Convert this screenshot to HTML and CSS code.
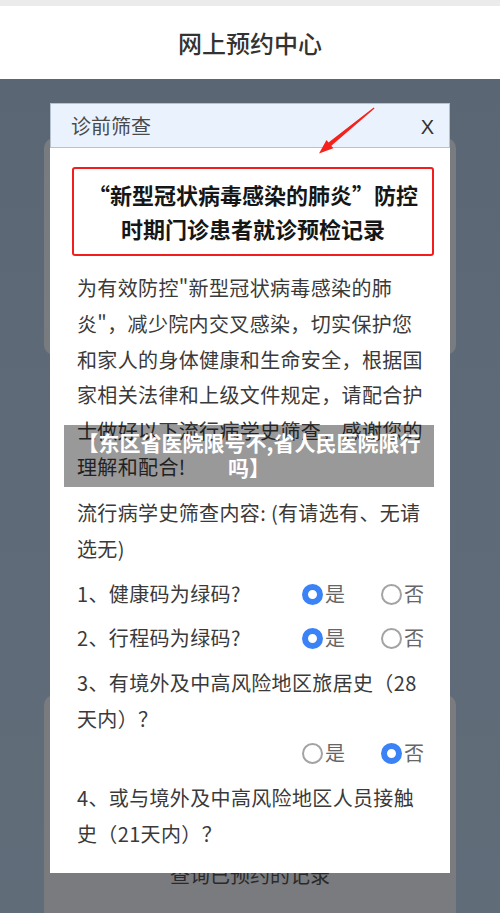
FILE: index.html
```html
<!DOCTYPE html>
<html lang="zh-CN">
<head>
<meta charset="utf-8">
<title>网上预约中心</title>
<link rel="stylesheet" href="styles.css">
</head>
<body>
<div class="strip"></div>
<header class="topbar">网上预约中心</header>
<main class="page">
  <div class="card card-one"></div>
  <div class="card card-two">查询已预约的记录</div>
</main>

<section class="modal">
  <div class="modal-head">
    <span class="modal-title">诊前筛查</span>
    <span class="modal-close">X</span>
  </div>
  <div class="modal-body">
    <div class="notice">“新型冠状病毒感染的肺炎”防控<br>时期门诊患者就诊预检记录</div>
    <p class="para">为有效防控"新型冠状病毒感染的肺炎"，减少院内交叉感染，切实保护您和家人的身体健康和生命安全，根据国家相关法律和上级文件规定，请配合护士做好以下流行病学史筛查，感谢您的理解和配合!</p>
    <p class="para para-2">流行病学史筛查内容: (有请选有、无请选无)</p>
    <div class="q q1">
      <span class="q-text">1、健康码为绿码?</span>
      <div class="opts">
        <span class="opt"><i class="radio on"></i>是</span>
        <span class="opt"><i class="radio"></i>否</span>
      </div>
    </div>
    <div class="q q2">
      <span class="q-text">2、行程码为绿码?</span>
      <div class="opts">
        <span class="opt"><i class="radio on"></i>是</span>
        <span class="opt"><i class="radio"></i>否</span>
      </div>
    </div>
    <div class="q q3">
      <span class="q-text">3、有境外及中高风险地区旅居史（28天内）？</span>
    </div>
    <div class="opts-row">
      <div class="opts">
        <span class="opt"><i class="radio"></i>是</span>
        <span class="opt"><i class="radio on"></i>否</span>
      </div>
    </div>
    <div class="q q4">
      <span class="q-text">4、或与境外及中高风险地区人员接触史（21天内）？</span>
    </div>
  </div>
</section>

<svg class="arrow" width="70" height="60" viewBox="0 0 70 60" aria-hidden="true">
  <polygon fill="#f5211c" points="63.7,8.4 64.5,9.5 21.3,46.8 23.3,49.3 9,54.5 16.5,41.0 18.5,43.5"/>
</svg>

<div class="banner">【东区省医院限号不,省人民医院限行吗】</div>
</body>
</html>
```

FILE: styles.css
```css
html, body {
  margin: 0;
  padding: 0;
  height: 913px;
  overflow: hidden;
}
body {
  position: relative;
  font-family: "Noto Sans CJK SC", "Noto Sans", sans-serif;
  background: #5e6a78;
}
.strip {
  height: 6px;
  background: #ebebeb;
}
.topbar {
  height: 73px;
  background: #ffffff;
  display: flex;
  align-items: center;
  justify-content: center;
  font-size: 24px;
  font-weight: 500;
  color: #333333;
}
.page {
  padding-top: 59px;
  box-sizing: border-box;
  background: linear-gradient(180deg, #5a6674 0%, #5e6a78 40%, #616c79 100%);
  height: 834px;
  overflow: hidden;
}
.card {
  margin: 0 44px;
  border-radius: 10px;
  background: #787b7f;
}
.card-one {
  height: 217px;
}
.card-two {
  margin-top: 340px;
  height: 240px;
  padding-top: 165px;
  box-sizing: border-box;
  text-align: center;
  font-size: 20px;
  line-height: 30px;
  color: #2a2a2c;
  background: #7a7b7e;
}

/* modal overlay */
.modal {
  position: absolute;
  left: 50px;
  top: 103px;
  width: 400px;
  height: 770px;
  background: #ffffff;
  overflow: hidden;
}
.modal-head {
  height: 45px;
  box-sizing: border-box;
  border: 1px solid #b6c2cf;
  background: #eaf3fd;
  display: flex;
  align-items: center;
  justify-content: space-between;
  padding: 0 15px 0 20px;
}
.modal-title {
  font-size: 20px;
  color: #4a4a4a;
}
.modal-close {
  font-family: "Liberation Sans", "Noto Sans", sans-serif;
  font-size: 20px;
  color: #333333;
  padding-top: 4px;
}
.modal-body {
  padding: 19px 23px 0 27px;
}
.notice {
  margin: 0 -7px 0 -5px;
  border: 2px solid #f21d1d;
  border-radius: 3px;
  padding: 8px 0 9px;
  text-align: center;
  font-size: 22px;
  font-weight: 700;
  line-height: 34px;
  color: #161616;
}
.para {
  margin: 14px 0 0;
  font-size: 20px;
  line-height: 35.8px;
  letter-spacing: 0.35px;
  color: #3a3a3a;
}
.para-2 {
  margin-top: 10px;
}
.q {
  display: flex;
  align-items: center;
  justify-content: space-between;
  font-size: 20px;
  line-height: 36px;
  letter-spacing: 0.35px;
  color: #3a3a3a;
}
.q1 { margin-top: 10px; }
.q2 { margin-top: 8px; }
.q3 { margin-top: 9px; }
.q4 { margin-top: 11px; }
.opts-row {
  display: flex;
  justify-content: flex-end;
  line-height: 32px;
}
.opts {
  display: flex;
  gap: 36px;
  padding-right: 3px;
  flex-shrink: 0;
}
.opt {
  display: flex;
  align-items: center;
  gap: 2px;
  font-size: 20px;
  color: #666666;
  letter-spacing: 0;
}
.radio {
  width: 21px;
  height: 21px;
  box-sizing: border-box;
  border-radius: 50%;
  border: 2px solid #a3a3a3;
  background: #ffffff;
}
.radio.on {
  border: 6px solid #3a82f6;
  background: #ffffff;
}

.arrow {
  position: absolute;
  left: 310px;
  top: 99px;
}
.banner {
  position: absolute;
  left: 64px;
  top: 425px;
  width: 370px;
  height: 62px;
  box-sizing: border-box;
  padding: 5px 12px 0;
  background: rgba(0, 0, 0, 0.4);
  color: #ffffff;
  font-size: 21px;
  font-weight: 700;
  line-height: 25px;
  text-align: center;
}
```
